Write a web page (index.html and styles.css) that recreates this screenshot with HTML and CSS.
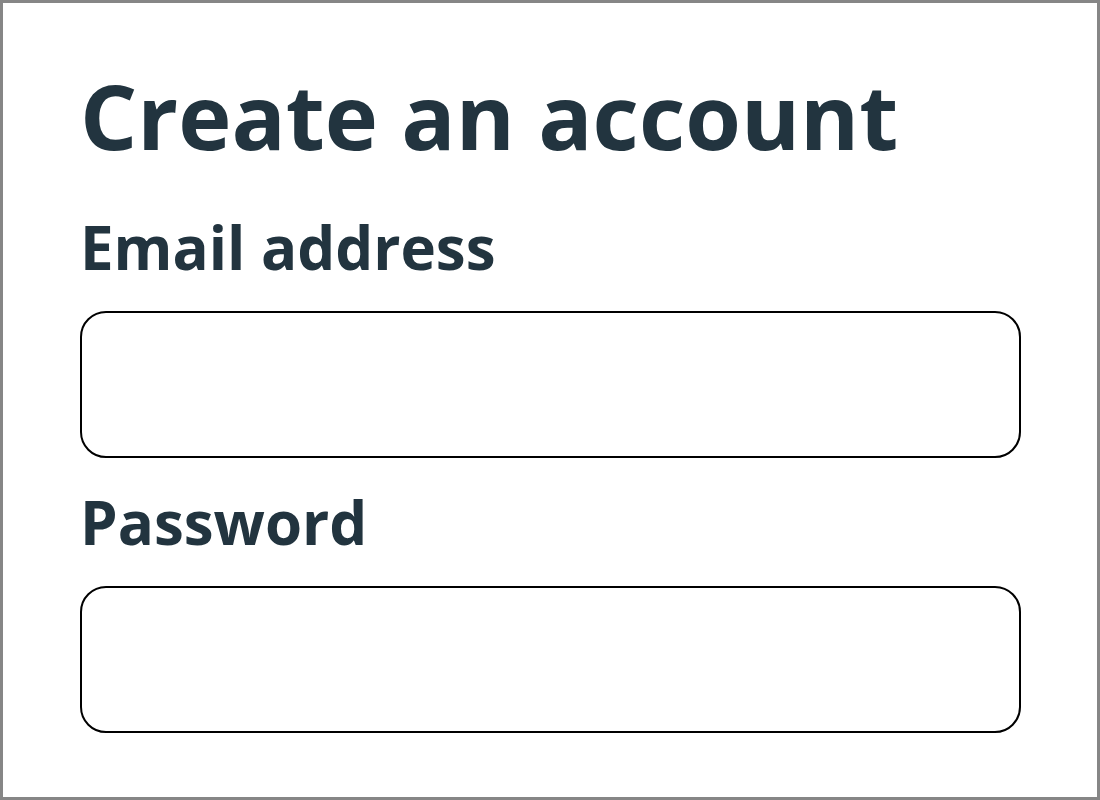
FILE: index.html
```html
<!DOCTYPE html>
<html lang="en">
<head>
    <meta charset="UTF-8">
    <meta name="viewport" content="width=device-width, initial-scale=1.0">
    <title>Create an account</title>
    <link rel="stylesheet" href="styles.css">
</head>
<body>
    <div class="frame">
        <form class="signup">
            <h1>Create an account</h1>
            <label for="email">Email address</label>
            <input type="email" id="email">
            <label for="password">Password</label>
            <input type="password" id="password">
        </form>
    </div>
</body>
</html>
```

FILE: styles.css
```css
* {
    margin: 0;
    padding: 0;
    box-sizing: border-box;
    font-family: "Open Sans", sans-serif;
}
body {
    background: #fff;
    color: #22343f;
}
.frame {
    width: 1100px;
    height: 800px;
    border: 3px solid #868686;
}
.signup {
    display: flex;
    flex-direction: column;
    padding: 62px 76px 0 77px;
}
h1 {
    font-size: 90px;
    font-weight: 700;
    line-height: 100px;
    margin-bottom: 47px;
}
label {
    font-size: 60px;
    font-weight: 700;
    line-height: 70px;
}
input {
    height: 147px;
    border: 2px solid #000;
    border-radius: 26px;
    margin: 29px 0 29px;
    outline: none;
}
```
